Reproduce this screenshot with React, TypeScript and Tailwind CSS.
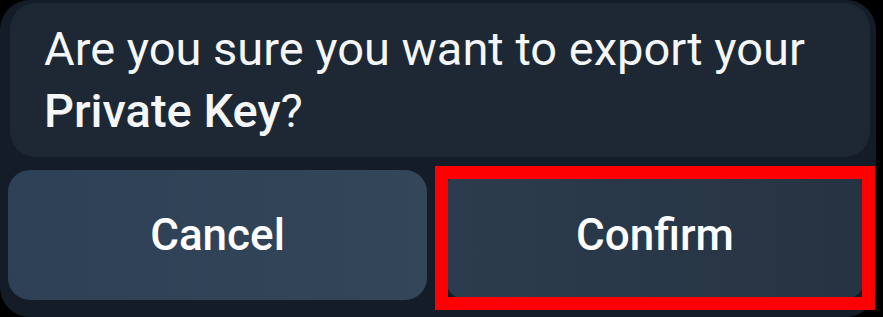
export default function App() {
  return (
    <div className="relative h-[317px] w-[883px] overflow-hidden bg-black font-['Roboto',sans-serif]">
      {/* Chat backdrop */}
      <div className="flex h-full w-[876px] flex-col rounded-[30px] bg-[#141d27] pt-[3px]">
        {/* Message bubble */}
        <div className="ml-[10px] h-[154px] w-[860px] rounded-[26px] bg-[#1d2834] px-[34px] pt-[15px]">
          <p className="text-[47px] leading-[62px] text-[#f4f6f8]">
            Are you sure you want to export your{" "}
            <span className="font-medium">Private Key</span>?
          </p>
        </div>

        {/* Action buttons */}
        <div className="mt-[13px] flex gap-[18px] pl-[8px]">
          <button className="h-[130px] w-[419px] rounded-[22px] bg-gradient-to-r from-[#2d4055] to-[#344659] text-[44px] font-medium text-white">
            Cancel
          </button>
          <button className="h-[130px] w-[420px] rounded-[22px] bg-gradient-to-r from-[#2c3c4e] to-[#263342] text-[44px] font-medium text-white">
            Confirm
          </button>
        </div>
      </div>

      {/* Highlight box */}
      <div className="absolute left-[435px] top-[166px] h-[144px] w-[440px] border-[13px] border-[#ff0000]" />
    </div>
  );
}
